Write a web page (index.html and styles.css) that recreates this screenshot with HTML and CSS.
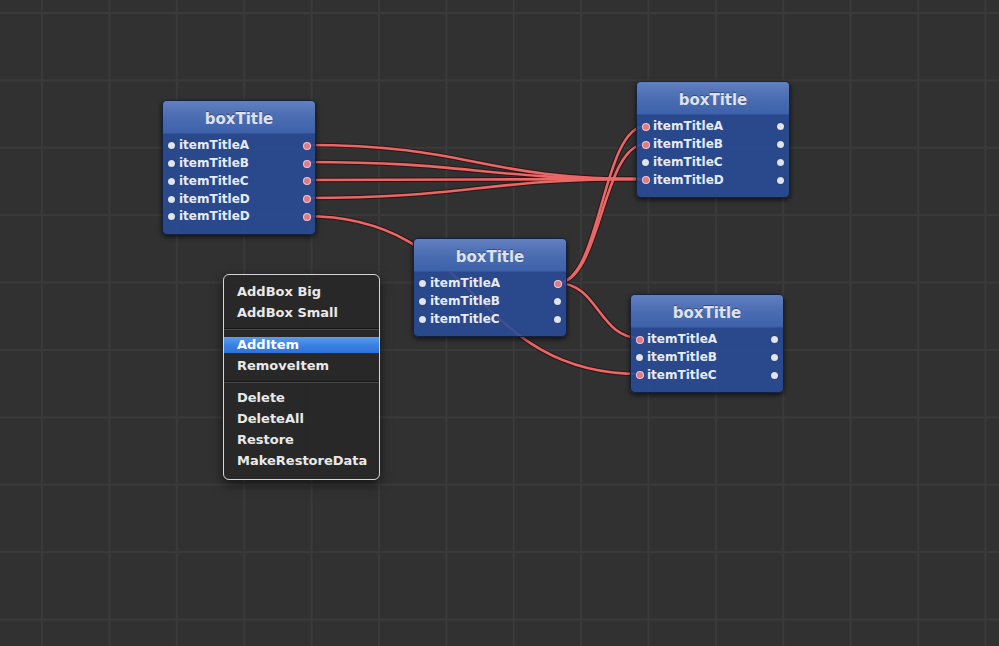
FILE: index.html
```html
<!DOCTYPE html>
<html>
<head>
<meta charset="utf-8">
<link rel="stylesheet" href="styles.css">
</head>
<body>
<div class="canvas">
  <svg class="wires" width="999" height="646" viewBox="0 0 999 646">
    <g class="wire-back">
      <path d="M305,145 C475.5,145 475.5,179 646,179"/>
      <path d="M305,162 C475.5,162 475.5,179 646,179"/>
      <path d="M305,180 C475.5,180 475.5,179 646,179"/>
      <path d="M305,198 C475.5,198 475.5,179 646,179"/>
      <path d="M305,216 C480,216 470,374 640,374"/>
      <path d="M557,283 C601.5,283 601.5,126 646,126"/>
      <path d="M557,283 C601.5,283 601.5,144 646,144"/>
      <path d="M557,283 C598.5,283 598.5,338 640,338"/>
    </g>
    <g class="wire-front">
      <path d="M305,145 C475.5,145 475.5,179 646,179"/>
      <path d="M305,162 C475.5,162 475.5,179 646,179"/>
      <path d="M305,180 C475.5,180 475.5,179 646,179"/>
      <path d="M305,198 C475.5,198 475.5,179 646,179"/>
      <path d="M305,216 C480,216 470,374 640,374"/>
      <path d="M557,283 C601.5,283 601.5,126 646,126"/>
      <path d="M557,283 C601.5,283 601.5,144 646,144"/>
      <path d="M557,283 C598.5,283 598.5,338 640,338"/>
    </g>
  </svg>

  <div class="node node-a">
    <div class="node-title">boxTitle</div>
    <div class="node-body">
      <div class="row"><span class="dot"></span><span class="label">itemTitleA</span><span class="dot on"></span></div>
      <div class="row"><span class="dot"></span><span class="label">itemTitleB</span><span class="dot on"></span></div>
      <div class="row"><span class="dot"></span><span class="label">itemTitleC</span><span class="dot on"></span></div>
      <div class="row"><span class="dot"></span><span class="label">itemTitleD</span><span class="dot on"></span></div>
      <div class="row"><span class="dot"></span><span class="label">itemTitleD</span><span class="dot on"></span></div>
    </div>
  </div>

  <div class="node node-b">
    <div class="node-title">boxTitle</div>
    <div class="node-body">
      <div class="row"><span class="dot on"></span><span class="label">itemTitleA</span><span class="dot"></span></div>
      <div class="row"><span class="dot on"></span><span class="label">itemTitleB</span><span class="dot"></span></div>
      <div class="row"><span class="dot"></span><span class="label">itemTitleC</span><span class="dot"></span></div>
      <div class="row"><span class="dot on"></span><span class="label">itemTitleD</span><span class="dot"></span></div>
    </div>
  </div>

  <div class="node node-c">
    <div class="node-title">boxTitle</div>
    <div class="node-body">
      <div class="row"><span class="dot"></span><span class="label">itemTitleA</span><span class="dot on"></span></div>
      <div class="row"><span class="dot"></span><span class="label">itemTitleB</span><span class="dot"></span></div>
      <div class="row"><span class="dot"></span><span class="label">itemTitleC</span><span class="dot"></span></div>
    </div>
  </div>

  <div class="node node-d">
    <div class="node-title">boxTitle</div>
    <div class="node-body">
      <div class="row"><span class="dot on"></span><span class="label">itemTitleA</span><span class="dot"></span></div>
      <div class="row"><span class="dot"></span><span class="label">itemTitleB</span><span class="dot"></span></div>
      <div class="row"><span class="dot on"></span><span class="label">itemTitleC</span><span class="dot"></span></div>
    </div>
  </div>

  <div class="menu">
    <div class="menu-item">AddBox Big</div>
    <div class="menu-item">AddBox Small</div>
    <div class="menu-sep"></div>
    <div class="menu-item active">AddItem</div>
    <div class="menu-item">RemoveItem</div>
    <div class="menu-sep"></div>
    <div class="menu-item">Delete</div>
    <div class="menu-item">DeleteAll</div>
    <div class="menu-item">Restore</div>
    <div class="menu-item">MakeRestoreData</div>
  </div>
</div>
</body>
</html>
```

FILE: styles.css
```css
html, body {
  margin: 0;
  padding: 0;
  background: #313131;
}

.canvas {
  position: relative;
  width: 999px;
  height: 646px;
  overflow: hidden;
  background-color: #313131;
  background-image:
    linear-gradient(to right, #3a3a3a 0, #3a3a3a 2px, transparent 2px),
    linear-gradient(to bottom, #3a3a3a 0, #3a3a3a 2px, transparent 2px);
  background-size: 67.4px 67.4px;
  background-position: 41px 12px;
  font-family: "DejaVu Sans", "Liberation Sans", sans-serif;
}

.wires {
  position: absolute;
  left: 0;
  top: 0;
}

.wire-back path {
  fill: none;
  stroke: #2a1010;
  stroke-width: 4.6;
  stroke-opacity: 0.85;
}

.wire-front path {
  fill: none;
  stroke: #ea6767;
  stroke-width: 2.6;
}

.node {
  position: absolute;
  width: 152px;
  border: 1px solid #15223f;
  border-radius: 5px;
  overflow: hidden;
  background: rgba(40, 76, 152, 0.88);
  box-shadow: 0 2px 5px rgba(0, 0, 0, 0.65);
  display: flex;
  flex-direction: column;
}

.node-a { left: 162px; top: 100px; }
.node-b { left: 636px; top: 81px; }
.node-c { left: 413px; top: 238px; }
.node-d { left: 630px; top: 294px; }

.node-title {
  height: 32px;
  line-height: 36px;
  text-align: center;
  font-size: 15px;
  font-weight: bold;
  color: #dde2ec;
  text-shadow: 0 -1px 0 rgba(0, 0, 0, 0.35);
  background: linear-gradient(to bottom, rgba(100, 131, 194, 0.95) 0%, rgba(84, 116, 184, 0.95) 35%, rgba(74, 108, 178, 0.95) 60%, rgba(63, 99, 172, 0.95) 100%);
  border-bottom: 1px solid #2f559f;
}

.node-body {
  padding: 3px 5px 8px 5px;
  display: flex;
  flex-direction: column;
}

.row {
  height: 17.75px;
  display: flex;
  align-items: center;
}

.label {
  flex: 1;
  margin-left: 4px;
  font-size: 12px;
  font-weight: bold;
  color: #e7ebf4;
  line-height: 17px;
  white-space: nowrap;
}

.dot {
  width: 7px;
  height: 7px;
  border-radius: 50%;
  background: #dfe4ee;
  box-shadow: 0 0 1px rgba(0, 0, 0, 0.6);
  flex: none;
}

.dot.on {
  background: #e07b86;
  box-shadow: 0 0 0 1px #f3c6cc;
  width: 6px;
  height: 6px;
  margin: 0 0.5px;
}

.menu {
  position: absolute;
  left: 223px;
  top: 274px;
  width: 155px;
  padding: 6px 0 8px 0;
  background: rgba(40, 40, 40, 0.97);
  border: 1px solid #d6d6d6;
  border-radius: 6px;
  box-shadow: 0 4px 12px rgba(0, 0, 0, 0.6);
  display: flex;
  flex-direction: column;
}

.menu-item {
  height: 21px;
  line-height: 21px;
  padding-left: 13px;
  font-size: 13px;
  font-weight: bold;
  color: #e9e9e9;
  white-space: nowrap;
}

.menu-item.active {
  height: 16px;
  line-height: 16px;
  margin: 3px 0 2px 0;
  color: #ffffff;
  background: linear-gradient(to bottom, #5a9ef0 0%, #3b82e4 50%, #2e72d8 100%);
}

.menu-sep {
  height: 11px;
  display: flex;
  flex-direction: column;
  justify-content: center;
}

.menu-sep::before {
  content: "";
  display: block;
  height: 1px;
  background: #141414;
  border-bottom: 1px solid #4a4a4a;
}
```
